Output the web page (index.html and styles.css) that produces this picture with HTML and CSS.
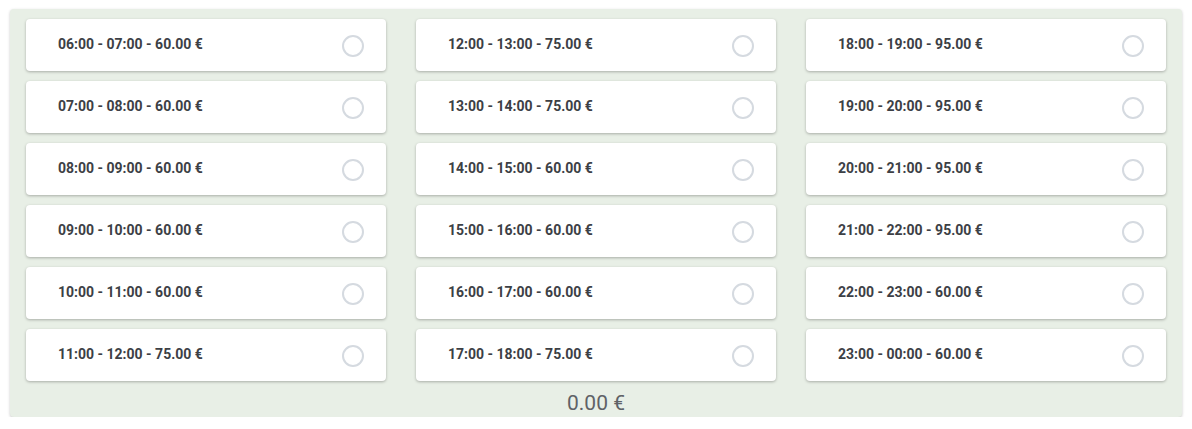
FILE: index.html
```html
<!DOCTYPE html>
<html>
<head>
<meta charset="utf-8">
<link rel="stylesheet" href="styles.css">
</head>
<body>
<div class="panel">
  <div class="grid">
    <label class="slot"><span class="txt">06:00 - 07:00 - 60.00 €</span><span class="radio"></span></label>
    <label class="slot"><span class="txt">12:00 - 13:00 - 75.00 €</span><span class="radio"></span></label>
    <label class="slot"><span class="txt">18:00 - 19:00 - 95.00 €</span><span class="radio"></span></label>
    <label class="slot"><span class="txt">07:00 - 08:00 - 60.00 €</span><span class="radio"></span></label>
    <label class="slot"><span class="txt">13:00 - 14:00 - 75.00 €</span><span class="radio"></span></label>
    <label class="slot"><span class="txt">19:00 - 20:00 - 95.00 €</span><span class="radio"></span></label>
    <label class="slot"><span class="txt">08:00 - 09:00 - 60.00 €</span><span class="radio"></span></label>
    <label class="slot"><span class="txt">14:00 - 15:00 - 60.00 €</span><span class="radio"></span></label>
    <label class="slot"><span class="txt">20:00 - 21:00 - 95.00 €</span><span class="radio"></span></label>
    <label class="slot"><span class="txt">09:00 - 10:00 - 60.00 €</span><span class="radio"></span></label>
    <label class="slot"><span class="txt">15:00 - 16:00 - 60.00 €</span><span class="radio"></span></label>
    <label class="slot"><span class="txt">21:00 - 22:00 - 95.00 €</span><span class="radio"></span></label>
    <label class="slot"><span class="txt">10:00 - 11:00 - 60.00 €</span><span class="radio"></span></label>
    <label class="slot"><span class="txt">16:00 - 17:00 - 60.00 €</span><span class="radio"></span></label>
    <label class="slot"><span class="txt">22:00 - 23:00 - 60.00 €</span><span class="radio"></span></label>
    <label class="slot"><span class="txt">11:00 - 12:00 - 75.00 €</span><span class="radio"></span></label>
    <label class="slot"><span class="txt">17:00 - 18:00 - 75.00 €</span><span class="radio"></span></label>
    <label class="slot"><span class="txt">23:00 - 00:00 - 60.00 €</span><span class="radio"></span></label>
  </div>
  <div class="total">0.00 €</div>
</div>
</body>
</html>
```
FILE: styles.css
```css
html, body {
  margin: 0;
  padding: 0;
  background: #ffffff;
}
body {
  padding: 9px 10px 0 10px;
  font-family: Roboto, "Liberation Sans", sans-serif;
}
.panel {
  background: #e8efe6;
  border-radius: 4px;
  box-shadow: 0 1px 3px rgba(0, 0, 0, 0.22);
  padding: 10px 16px 0 16px;
  height: 408px;
  box-sizing: border-box;
}
.grid {
  display: grid;
  grid-template-columns: repeat(3, 360px);
  column-gap: 30px;
  row-gap: 10px;
}
.slot {
  display: flex;
  align-items: center;
  justify-content: space-between;
  height: 52px;
  background: #ffffff;
  border-radius: 4px;
  box-shadow: 0 1px 3px rgba(0, 0, 0, 0.28);
  padding: 0 22px 0 32px;
  box-sizing: border-box;
}
.txt {
  font-size: 14px;
  font-weight: 700;
  color: #3c4045;
  margin-top: -2px;
}
.radio {
  width: 22px;
  height: 22px;
  border: 2px solid #d5dae0;
  border-radius: 50%;
  box-sizing: border-box;
  margin-top: 1px;
}
.total {
  text-align: center;
  font-size: 21px;
  font-weight: 400;
  color: #5f6266;
  margin-top: 10px;
  line-height: 24px;
}
```
